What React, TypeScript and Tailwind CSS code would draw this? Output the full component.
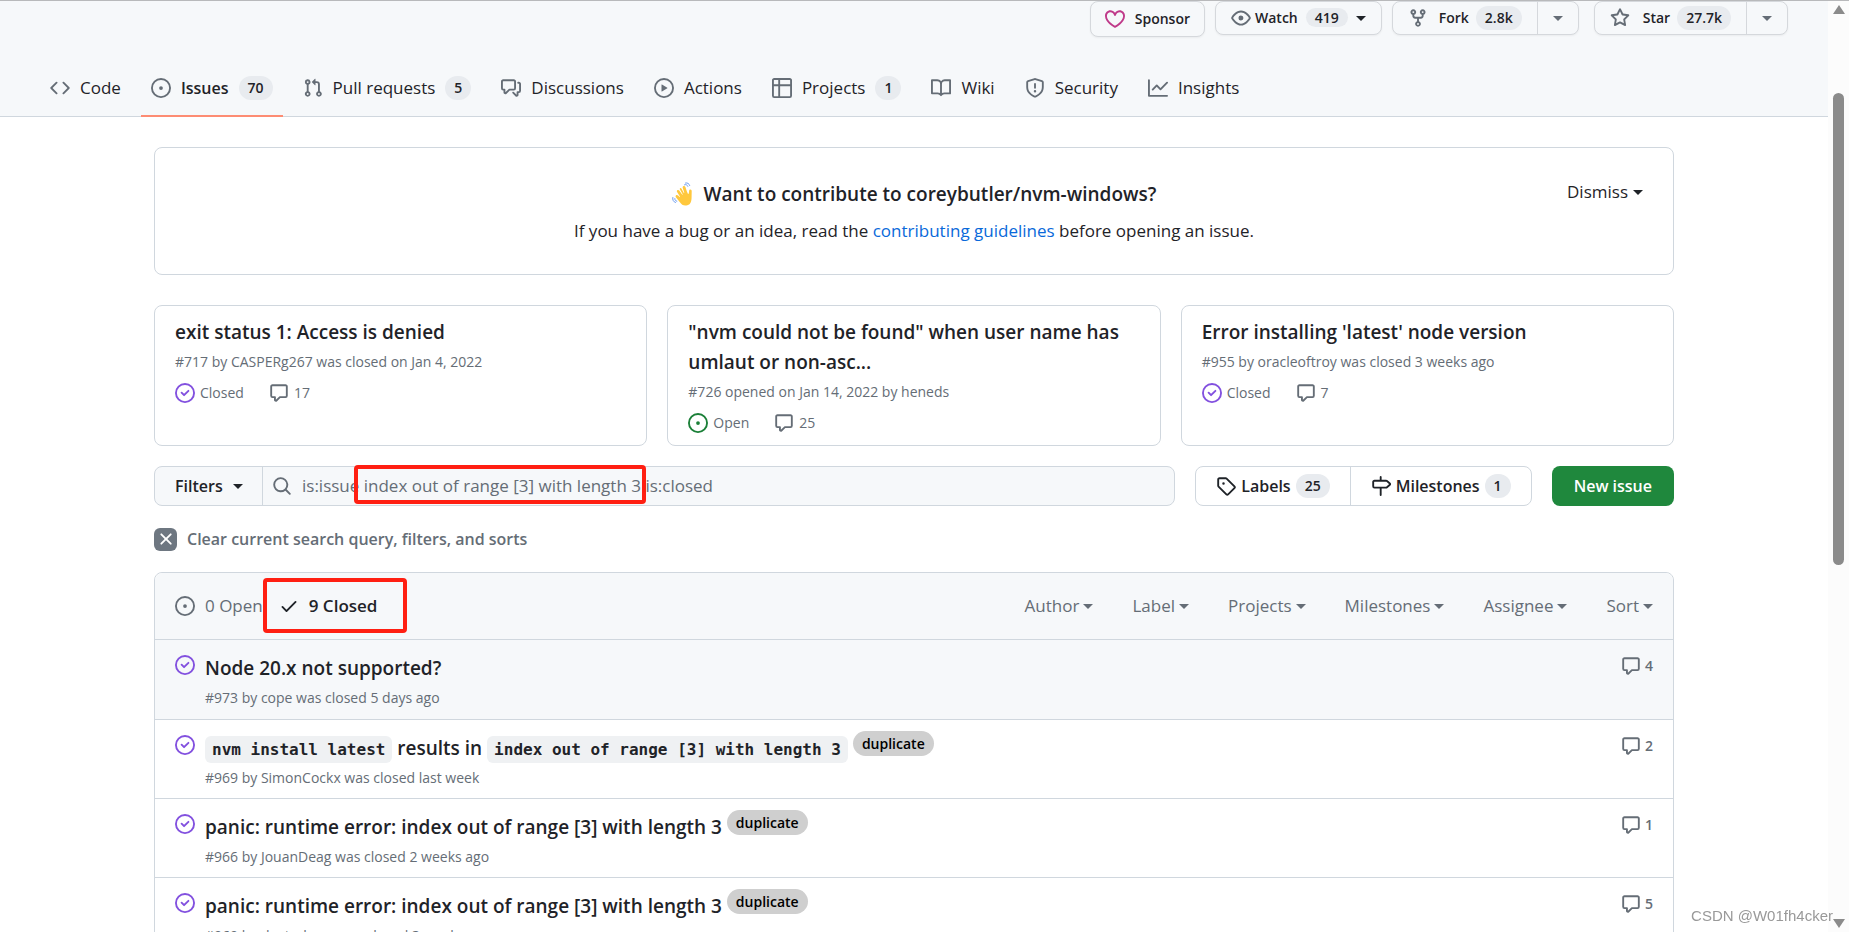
import type { ReactNode } from "react";

const paths = {
  code: "m11.28 3.22 4.25 4.25a.75.75 0 0 1 0 1.06l-4.25 4.25a.749.749 0 0 1-1.275-.326.749.749 0 0 1 .215-.734L13.94 8l-3.72-3.72a.749.749 0 0 1 .326-1.275.749.749 0 0 1 .734.215Zm-6.56 0a.751.751 0 0 1 1.042.018.751.751 0 0 1 .018 1.042L2.06 8l3.72 3.72a.749.749 0 0 1-.326 1.275.749.749 0 0 1-.734-.215L.47 8.53a.75.75 0 0 1 0-1.06Z",
  issue: "M8 9.5a1.5 1.5 0 1 0 0-3 1.5 1.5 0 0 0 0 3ZM8 0a8 8 0 1 1 0 16A8 8 0 0 1 8 0ZM1.5 8a6.5 6.5 0 1 0 13 0 6.5 6.5 0 0 0-13 0Z",
  closed: "M11.28 6.78a.75.75 0 0 0-1.06-1.06L7.25 8.69 5.78 7.22a.75.75 0 0 0-1.06 1.06l2 2a.75.75 0 0 0 1.06 0l3.5-3.5ZM16 8A8 8 0 1 1 0 8a8 8 0 0 1 16 0Zm-1.5 0a6.5 6.5 0 1 0-13 0 6.5 6.5 0 0 0 13 0Z",
  pull: "M1.5 3.25a2.25 2.25 0 1 1 3 2.122v5.256a2.251 2.251 0 1 1-1.5 0V5.372A2.25 2.25 0 0 1 1.5 3.25Zm5.677-.177L9.573.677A.25.25 0 0 1 10 .854V2.5h1A2.5 2.5 0 0 1 13.5 5v5.628a2.251 2.251 0 1 1-1.5 0V5a1 1 0 0 0-1-1h-1v1.646a.25.25 0 0 1-.427.177L7.177 3.427a.25.25 0 0 1 0-.354ZM3.75 2.5a.75.75 0 1 0 0 1.5.75.75 0 0 0 0-1.5Zm0 9.5a.75.75 0 1 0 0 1.5.75.75 0 0 0 0-1.5Zm8.25.75a.75.75 0 1 0 1.5 0 .75.75 0 0 0-1.5 0Z",
  discussions: "M1.75 1h8.5c.966 0 1.75.784 1.75 1.75v5.5A1.75 1.75 0 0 1 10.25 10H7.061l-2.574 2.573A1.458 1.458 0 0 1 2 11.543V10h-.25A1.75 1.75 0 0 1 0 8.25v-5.5C0 1.784.784 1 1.75 1ZM1.5 2.75v5.5c0 .138.112.25.25.25h1a.75.75 0 0 1 .75.75v2.19l2.72-2.72a.749.749 0 0 1 .53-.22h3.5a.25.25 0 0 0 .25-.25v-5.5a.25.25 0 0 0-.25-.25h-8.5a.25.25 0 0 0-.25.25Zm13 2a.25.25 0 0 0-.25-.25h-.5a.75.75 0 0 1 0-1.5h.5c.966 0 1.75.784 1.75 1.75v5.5A1.75 1.75 0 0 1 14.25 12H14v1.543a1.458 1.458 0 0 1-2.487 1.03L9.22 12.28a.749.749 0 0 1 .326-1.275.749.749 0 0 1 .734.215l2.22 2.22v-2.19a.75.75 0 0 1 .75-.75h1a.25.25 0 0 0 .25-.25Z",
  play: "M8 0a8 8 0 1 1 0 16A8 8 0 0 1 8 0ZM1.5 8a6.5 6.5 0 1 0 13 0 6.5 6.5 0 0 0-13 0Zm4.879-2.773 4.264 2.559a.25.25 0 0 1 0 .428l-4.264 2.559A.25.25 0 0 1 6 10.559V5.442a.25.25 0 0 1 .379-.215Z",
  table: "M0 1.75C0 .784.784 0 1.75 0h12.5C15.216 0 16 .784 16 1.75v12.5A1.75 1.75 0 0 1 14.25 16H1.75A1.75 1.75 0 0 1 0 14.25ZM6.5 6.5v8h7.75a.25.25 0 0 0 .25-.25V6.5Zm8-1.5V1.75a.25.25 0 0 0-.25-.25H6.5V5Zm-13 1.5v7.75c0 .138.112.25.25.25H5v-8ZM5 5V1.5H1.75a.25.25 0 0 0-.25.25V5Z",
  book: "M0 1.75A.75.75 0 0 1 .75 1h4.253c1.227 0 2.317.59 3 1.501A3.743 3.743 0 0 1 11.006 1h4.245a.75.75 0 0 1 .75.75v10.5a.75.75 0 0 1-.75.75h-4.507a2.25 2.25 0 0 0-1.591.659l-.622.621a.75.75 0 0 1-1.06 0l-.622-.621A2.25 2.25 0 0 0 5.258 13H.75a.75.75 0 0 1-.75-.75Zm7.251 10.324.004-5.073-.002-2.253A2.25 2.25 0 0 0 5.003 2.5H1.5v9h3.757a3.75 3.75 0 0 1 1.994.574ZM8.755 4.75l-.004 7.322a3.752 3.752 0 0 1 1.992-.572H14.5v-9h-3.495a2.25 2.25 0 0 0-2.25 2.25Z",
  shield: "M7.467.133a1.748 1.748 0 0 1 1.066 0l5.25 1.68A1.75 1.75 0 0 1 15 3.48V7c0 1.566-.32 3.182-1.303 4.682-.983 1.498-2.585 2.813-5.032 3.855a1.697 1.697 0 0 1-1.33 0c-2.447-1.042-4.049-2.357-5.032-3.855C1.32 10.182 1 8.566 1 7V3.48a1.755 1.755 0 0 1 1.217-1.667Zm.61 1.429a.25.25 0 0 0-.153 0l-5.25 1.68a.25.25 0 0 0-.174.238V7c0 1.358.275 2.666 1.057 3.86.784 1.194 2.121 2.34 4.366 3.297a.196.196 0 0 0 .154 0c2.245-.956 3.582-2.104 4.366-3.298C13.225 9.666 13.5 8.36 13.5 7V3.48a.251.251 0 0 0-.174-.237l-5.25-1.68ZM8.75 4.75v3a.75.75 0 0 1-1.5 0v-3a.75.75 0 0 1 1.5 0ZM9 10.5a1 1 0 1 1-2 0 1 1 0 0 1 2 0Z",
  graph: "M1.5 1.75V13.5h13.75a.75.75 0 0 1 0 1.5H.75a.75.75 0 0 1-.75-.75V1.75a.75.75 0 0 1 1.5 0Zm14.28 2.53-5.25 5.25a.75.75 0 0 1-1.06 0L7 7.06 4.28 9.78a.751.751 0 0 1-1.042-.018.751.751 0 0 1-.018-1.042l3.25-3.25a.75.75 0 0 1 1.06 0L10 7.94l4.72-4.72a.751.751 0 0 1 1.042.018.751.751 0 0 1 .018 1.042Z",
  heart: "m8 14.25.345.666a.75.75 0 0 1-.69 0l-.008-.004-.018-.01a7.152 7.152 0 0 1-.31-.17 22.055 22.055 0 0 1-3.434-2.414C2.045 10.731 0 8.35 0 5.5 0 2.836 2.086 1 4.25 1 5.797 1 7.153 1.802 8 3.02 8.847 1.802 10.203 1 11.75 1 13.914 1 16 2.836 16 5.5c0 2.85-2.045 5.231-3.885 6.818a22.066 22.066 0 0 1-3.744 2.584l-.018.01-.006.003h-.002ZM4.25 2.5c-1.336 0-2.75 1.164-2.75 3 0 2.15 1.58 4.144 3.365 5.682A20.58 20.58 0 0 0 8 13.393a20.58 20.58 0 0 0 3.135-2.211C12.92 9.644 14.5 7.65 14.5 5.5c0-1.836-1.414-3-2.75-3-1.373 0-2.609.986-3.029 2.456a.749.749 0 0 1-1.442 0C6.859 3.486 5.623 2.5 4.25 2.5Z",
  eye: "M8 2c1.981 0 3.671.992 4.933 2.078 1.27 1.091 2.187 2.345 2.637 3.023a1.62 1.62 0 0 1 0 1.798c-.45.678-1.367 1.932-2.637 3.023C11.67 13.008 9.981 14 8 14c-1.981 0-3.671-.992-4.933-2.078C1.797 10.83.88 9.576.43 8.898a1.62 1.62 0 0 1 0-1.798c.45-.677 1.367-1.931 2.637-3.022C4.33 2.992 6.019 2 8 2ZM1.679 7.932a.12.12 0 0 0 0 .136c.411.622 1.241 1.75 2.366 2.717C5.176 11.758 6.527 12.5 8 12.5c1.473 0 2.825-.742 3.955-1.715 1.124-.967 1.954-2.096 2.366-2.717a.12.12 0 0 0 0-.136c-.412-.621-1.242-1.75-2.366-2.717C10.824 4.242 9.473 3.5 8 3.5c-1.473 0-2.825.742-3.955 1.715-1.124.967-1.954 2.096-2.366 2.717ZM8 10a2 2 0 1 1-.001-3.999A2 2 0 0 1 8 10Z",
  fork: "M5 5.372v.878c0 .414.336.75.75.75h4.5a.75.75 0 0 0 .75-.75v-.878a2.25 2.25 0 1 1 1.5 0v.878a2.25 2.25 0 0 1-2.25 2.25h-1.5v2.128a2.251 2.251 0 1 1-1.5 0V8.5h-1.5A2.25 2.25 0 0 1 3.5 6.25v-.878a2.25 2.25 0 1 1 1.5 0ZM5 3.25a.75.75 0 1 0-1.5 0 .75.75 0 0 0 1.5 0Zm6.75.75a.75.75 0 1 0 0-1.5.75.75 0 0 0 0 1.5Zm-3 8.75a.75.75 0 1 0-1.5 0 .75.75 0 0 0 1.5 0Z",
  star: "M8 .25a.75.75 0 0 1 .673.418l1.882 3.815 4.21.612a.75.75 0 0 1 .416 1.279l-3.046 2.97.719 4.192a.751.751 0 0 1-1.088.791L8 12.347l-3.766 1.98a.75.75 0 0 1-1.088-.79l.72-4.194L.818 6.374a.75.75 0 0 1 .416-1.28l4.21-.611L7.327.668A.75.75 0 0 1 8 .25Zm0 2.445L6.615 5.5a.75.75 0 0 1-.564.41l-3.097.45 2.24 2.184a.75.75 0 0 1 .216.664l-.528 3.084 2.769-1.456a.75.75 0 0 1 .698 0l2.77 1.456-.53-3.084a.75.75 0 0 1 .216-.664l2.24-2.183-3.096-.45a.75.75 0 0 1-.564-.41L8 2.694Z",
  comment: "M1 2.75C1 1.784 1.784 1 2.75 1h10.5c.966 0 1.75.784 1.75 1.75v7.5A1.75 1.75 0 0 1 13.25 12H9.06l-2.573 2.573A1.458 1.458 0 0 1 4 13.543V12H2.75A1.75 1.75 0 0 1 1 10.25Zm1.75-.25a.25.25 0 0 0-.25.25v7.5c0 .138.112.25.25.25h2a.75.75 0 0 1 .75.75v2.19l2.72-2.72a.749.749 0 0 1 .53-.22h4.5a.25.25 0 0 0 .25-.25v-7.5a.25.25 0 0 0-.25-.25Z",
  search: "M10.68 11.74a6 6 0 0 1-7.922-8.982 6 6 0 0 1 8.982 7.922l3.04 3.04a.749.749 0 0 1-.326 1.275.749.749 0 0 1-.734-.215ZM11.5 7a4.499 4.499 0 1 0-8.997 0A4.499 4.499 0 0 0 11.5 7Z",
  tag: "M1 7.775V2.75C1 1.784 1.784 1 2.75 1h5.025c.464 0 .91.184 1.238.513l6.25 6.25a1.75 1.75 0 0 1 0 2.474l-5.026 5.026a1.75 1.75 0 0 1-2.474 0l-6.25-6.25A1.752 1.752 0 0 1 1 7.775Zm1.5 0c0 .066.026.13.073.177l6.25 6.25a.25.25 0 0 0 .354 0l5.025-5.025a.25.25 0 0 0 0-.354l-6.25-6.25a.25.25 0 0 0-.177-.073H2.75a.25.25 0 0 0-.25.25ZM6 5a1 1 0 1 1 0 2 1 1 0 0 1 0-2Z",
  milestone: "M7.75 0a.75.75 0 0 1 .75.75V3h3.634c.414 0 .814.147 1.13.414l2.07 1.75a1.75 1.75 0 0 1 0 2.672l-2.07 1.75a1.75 1.75 0 0 1-1.13.414H8.5v5.25a.75.75 0 0 1-1.5 0V10H2.75A1.75 1.75 0 0 1 1 8.25v-3.5C1 3.784 1.784 3 2.75 3H7V.75A.75.75 0 0 1 7.75 0Zm4.384 8.5a.25.25 0 0 0 .161-.059l2.07-1.75a.248.248 0 0 0 0-.382l-2.07-1.75a.25.25 0 0 0-.161-.059H2.75a.25.25 0 0 0-.25.25v3.5c0 .138.112.25.25.25h9.384Z",
  check: "M13.78 4.22a.75.75 0 0 1 0 1.06l-7.25 7.25a.75.75 0 0 1-1.06 0L2.22 9.28a.751.751 0 0 1 .018-1.042.751.751 0 0 1 1.042-.018L6 10.94l6.72-6.72a.75.75 0 0 1 1.06 0Z",
  x: "M3.72 3.72a.75.75 0 0 1 1.06 0L8 6.94l3.22-3.22a.749.749 0 0 1 1.275.326.749.749 0 0 1-.215.734L9.06 8l3.22 3.22a.749.749 0 0 1-.326 1.275.749.749 0 0 1-.734-.215L8 9.06l-3.22 3.22a.751.751 0 0 1-1.042-.018.751.751 0 0 1-.018-1.042L6.94 8 3.72 4.78a.75.75 0 0 1 0-1.06Z",
};

type IconName = keyof typeof paths;

function Icon({ name, className = "text-[#656d76]" }: { name: IconName; className?: string }) {
  return (
    <svg viewBox="0 0 16 16" fill="currentColor" aria-hidden="true" className={`size-5 shrink-0 ${className}`}>
      <path d={paths[name]} fillRule="evenodd" />
    </svg>
  );
}

function Caret() {
  return (
    <span
      aria-hidden="true"
      className="inline-block shrink-0 border-x-5 border-t-5 border-x-transparent border-t-current"
    />
  );
}

function Counter({ children }: { children: ReactNode }) {
  return (
    <span className="rounded-full bg-[#e8ebef] px-[9px] text-sm leading-6 font-semibold text-[#1f2328]">
      {children}
    </span>
  );
}

function Wave() {
  return (
    <svg viewBox="0 0 20 24" className="h-6 w-5 shrink-0" aria-hidden="true">
      <path
        fill="#ffc83d"
        d="M7.6 6.2c.9-.5 1.7 0 2.1.7l2.1 4 .5-.2-1.6-4.6c-.3-1 .1-1.7.8-2 .9-.3 1.6.2 1.9 1l1.6 4.6.9 2 .9.1.3-2.800c.1-1 .7-1.500 1.400-1.400.8.1 1.200.7 1.200 1.600l-.1 5.200c0 4.600-.7 7.800-4.200 8.800-3.300 1-5.800-.4-7.500-3l-4-5c-.5-.8-.4-1.600.2-2 .7-.5 1.400-.3 2 .4l1.600 1.500.4-.4-3-4.600c-.4-.8-.3-1.600.4-2 .7-.4 1.500-.1 1.900.6l2.900 4.100.5-.3-2.700-4.700c-.4-.7-.3-1.300.2-1.600Z"
      />
      <g fill="none" stroke="#6d9df0" strokeLinecap="round">
        <path d="M12.500 2.800c1.500-.6 2.700 0 3.300 1.500M13.500 1c2-.5 3.600.6 4.200 2.500M2.800 16.600c-.1 1.400.6 2.200 2 2.600M.8 15.500c-.5 2.300.6 4.300 2.700 5" />
      </g>
    </svg>
  );
}

const tabs: { icon: IconName; label: string; count?: number; active?: boolean }[] = [
  { icon: "code", label: "Code" },
  { icon: "issue", label: "Issues", count: 70, active: true },
  { icon: "pull", label: "Pull requests", count: 5 },
  { icon: "discussions", label: "Discussions" },
  { icon: "play", label: "Actions" },
  { icon: "table", label: "Projects", count: 1 },
  { icon: "book", label: "Wiki" },
  { icon: "shield", label: "Security" },
  { icon: "graph", label: "Insights" },
];

const pinned = [
  { title: "exit status 1: Access is denied", meta: "#717 by CASPERg267 was closed on Jan 4, 2022", open: false, comments: 17 },
  { title: '"nvm could not be found" when user name has umlaut or non-asc...', meta: "#726 opened on Jan 14, 2022 by heneds", open: true, comments: 25 },
  { title: "Error installing 'latest' node version", meta: "#955 by oracleoftroy was closed 3 weeks ago", open: false, comments: 7 },
];

const code = "rounded-md bg-[#eff1f3] px-[7px] py-1 font-['DejaVu_Sans_Mono',monospace] text-base leading-5";

const issues: { title: ReactNode; meta: string; duplicate: boolean; comments: number }[] = [
  { title: "Node 20.x not supported?", meta: "#973 by cope was closed 5 days ago", duplicate: false, comments: 4 },
  {
    title: (
      <>
        <code className={code}>nvm install latest</code> results in{" "}
        <code className={code}>index out of range [3] with length 3</code>
      </>
    ),
    meta: "#969 by SimonCockx was closed last week",
    duplicate: true,
    comments: 2,
  },
  { title: "panic: runtime error: index out of range [3] with length 3", meta: "#966 by JouanDeag was closed 2 weeks ago", duplicate: true, comments: 1 },
  { title: "panic: runtime error: index out of range [3] with length 3", meta: "#960 by dusterlowe was closed 3 weeks ago", duplicate: true, comments: 5 },
];

const menus = ["Author", "Label", "Projects", "Milestones", "Assignee", "Sort"];

const repoButton = "flex items-center rounded-lg border border-[#d5d8dc] bg-[#f6f8fa] text-sm font-semibold shadow-xs";

function Header() {
  return (
    <header className="border-b border-[#d0d7de] bg-[#f6f8fa]">
      <div className="flex items-start justify-end gap-[10px] pr-10">
        <button className={`${repoButton} h-9 gap-[10px] px-[14px]`}>
          <Icon name="heart" className="text-[#bf3989]" />
          Sponsor
        </button>
        <button className={`${repoButton} h-[34px] gap-1 px-[15px]`}>
          <Icon name="eye" />
          Watch
          <span className="mx-1"><Counter>419</Counter></span>
          <Caret />
        </button>
        <div className={`${repoButton} mr-[5px] h-[34px]`}>
          <button className="flex h-full items-center gap-[7px] px-[15px]">
            <Icon name="fork" />
            <span className="pl-1">Fork</span>
            <Counter>2.8k</Counter>
          </button>
          <button aria-label="See your forks" className="flex h-full items-center border-l border-[#d5d8dc] px-[15px] text-[#656d76]">
            <Caret />
          </button>
        </div>
        <div className={`${repoButton} h-[34px]`}>
          <button className="flex h-full items-center gap-[7px] px-[15px]">
            <Icon name="star" />
            <span className="pl-[6px]">Star</span>
            <Counter>27.7k</Counter>
          </button>
          <button aria-label="Add to a list" className="flex h-full items-center border-l border-[#d5d8dc] px-[15px] text-[#656d76]">
            <Caret />
          </button>
        </div>
      </div>
      <nav className="mt-6 flex gap-[10px] px-10">
        {tabs.map((tab) => (
          <a
            key={tab.label}
            href="#"
            className={`-mb-px flex h-14 items-center gap-[10px] border-b-2 px-[10px] ${
              tab.active ? "border-[#fd8c73] text-base font-semibold" : "border-transparent"
            }`}
          >
            <Icon name={tab.icon} />
            {tab.label}
            {tab.count && <Counter>{tab.count}</Counter>}
          </a>
        ))}
      </nav>
    </header>
  );
}

function Toolbar() {
  return (
    <div className="mt-5 flex gap-5 text-base">
      <form className="relative flex h-10 flex-1 rounded-lg border border-[#d0d7de] bg-[#f6f8fa]">
        <button type="button" className="flex w-27 items-center gap-[10px] border-r border-[#d0d7de] pl-5 font-semibold">
          Filters
          <Caret />
        </button>
        <label htmlFor="issue-search" className="flex items-center pl-[9px]">
          <Icon name="search" />
        </label>
        <input
          id="issue-search"
          aria-label="Search all issues"
          defaultValue="is:issue index out of range [3] with length 3 is:closed"
          className="min-w-0 flex-1 bg-transparent pl-[10px] text-[17px] text-[#656d76] outline-none"
        />
        <span className="pointer-events-none absolute -top-0.5 left-[199px] h-[39px] w-73 rounded-sm border-4 border-[#ff1f12]" />
      </form>
      <div className="flex h-10 rounded-lg border border-[#d0d7de] font-semibold">
        <a href="#" className="flex items-center gap-[5px] border-r border-[#d0d7de] px-5">
          <Icon name="tag" className="text-[#1f2328]" />
          Labels <Counter>25</Counter>
        </a>
        <a href="#" className="flex items-center gap-[5px] px-5">
          <Icon name="milestone" className="text-[#1f2328]" />
          Milestones <Counter>1</Counter>
        </a>
      </div>
      <a href="#" className="flex h-10 items-center rounded-lg bg-[#1f883d] px-[22px] font-semibold text-white">
        New issue
      </a>
    </div>
  );
}

export default function App() {
  return (
    <div className="flex h-screen overflow-hidden border-t border-[#b8b9bb] bg-white font-['Open_Sans','Noto_Sans',sans-serif] text-[17px] leading-6 text-[#1f2328]">
      <div className="min-w-0 flex-1">
        <Header />
        <main className="mx-auto mt-[30px] max-w-380">
          <section className="relative rounded-lg border border-[#d0d7de] py-[31px] text-center">
            <h2 className="flex items-center justify-center gap-3 text-[19px] leading-[30px] font-semibold">
              <Wave />
              Want to contribute to coreybutler/nvm-windows?
            </h2>
            <p className="mt-[10px]">
              If you have a bug or an idea, read the{" "}
              <a href="#" className="text-[#0969da]">contributing guidelines</a> before opening an issue.
            </p>
            <button className="absolute top-8 right-[30px] flex items-center gap-[5px]">
              Dismiss <Caret />
            </button>
          </section>

          <section className="mt-[30px] grid grid-cols-3 gap-5">
            {pinned.map((item) => (
              <article key={item.meta} className="rounded-lg border border-[#d0d7de] px-5 pt-[11px] pb-[6px] text-sm text-[#656d76]">
                <h3 className="text-[19px] leading-[30px] font-semibold text-[#1f2328]">
                  <a href="#">{item.title}</a>
                </h3>
                <p className="leading-[30px]">{item.meta}</p>
                <div className="flex h-8 items-center gap-[5px]">
                  <Icon name={item.open ? "issue" : "closed"} className={item.open ? "text-[#1a7f37]" : "text-[#8250df]"} />
                  {item.open ? "Open" : "Closed"}
                  <a href="#" className="ml-5 flex items-center gap-[5px]">
                    <Icon name="comment" />
                    {item.comments}
                  </a>
                </div>
              </article>
            ))}
          </section>

          <Toolbar />

          <a href="#" className="mt-[21px] flex w-fit items-center gap-[10px] text-base font-semibold text-[#656d76]">
            <span className="flex size-[23px] items-center justify-center rounded-md bg-[#6e7781]">
              <Icon name="x" className="text-white" />
            </span>
            Clear current search query, filters, and sorts
          </a>

          <section className="mt-[21px] rounded-lg border border-[#d0d7de]">
            <div className="flex h-[66px] items-center rounded-t-lg bg-[#f6f8fa] px-5 text-[#656d76]">
              <a href="#" className="flex items-center gap-[10px]">
                <Icon name="issue" />0 Open
              </a>
              <a href="#" className="relative ml-4 flex items-center gap-[10px] font-semibold text-[#1f2328]">
                <Icon name="check" className="text-[#1f2328]" />9 Closed
                <span className="pointer-events-none absolute -top-4 -left-4 h-[55px] w-36 rounded-sm border-4 border-[#ff1f12]" />
              </a>
              <div className="ml-auto flex gap-[39px]">
                {menus.map((menu) => (
                  <button key={menu} className="flex items-center gap-1">
                    {menu} <Caret />
                  </button>
                ))}
              </div>
            </div>
            <ul>
              {issues.map((issue) => (
                <li key={issue.meta} className="flex h-[79px] border-t border-[#d0d7de] px-5 pt-[15px] text-sm text-[#656d76] first:h-20 first:bg-[#f6f8fa]">
                  <Icon name="closed" className="text-[#8250df]" />
                  <div className="ml-[10px] flex-1">
                    <div className="flex items-start gap-[5px]">
                      <a href="#" className="text-[19px] leading-[26px] font-semibold text-[#1f2328]">
                        {issue.title}
                      </a>
                      {issue.duplicate && (
                        <a href="#" className="-mt-1 rounded-full bg-[#cfcfcf] px-[9px] leading-[25px] font-semibold text-black">
                          duplicate
                        </a>
                      )}
                    </div>
                    <p className="mt-[7px] leading-5">{issue.meta}</p>
                  </div>
                  <a href="#" className="flex h-[22px] items-center gap-1 font-semibold">
                    <Icon name="comment" />
                    {issue.comments}
                  </a>
                </li>
              ))}
            </ul>
          </section>
        </main>
      </div>

      <div aria-hidden="true" className="flex h-full w-[21px] flex-col items-center bg-[#fcfcfc] pt-1 pb-1 text-[#8b8b8b]">
        <svg viewBox="0 0 12 10" className="h-[10px] w-3" fill="currentColor"><path d="M6 0 12 9H0Z" /></svg>
        <div className="mt-[78px] h-[472px] w-[11px] rounded-full bg-[#8b8b8b]" />
        <svg viewBox="0 0 12 10" className="mt-auto h-[10px] w-3" fill="currentColor"><path d="M6 10 0 1h12Z" /></svg>
      </div>

      <span className="fixed right-4 bottom-1 font-['Liberation_Sans',sans-serif] text-[15px] text-[#999]">CSDN @W01fh4cker</span>
    </div>
  );
}
